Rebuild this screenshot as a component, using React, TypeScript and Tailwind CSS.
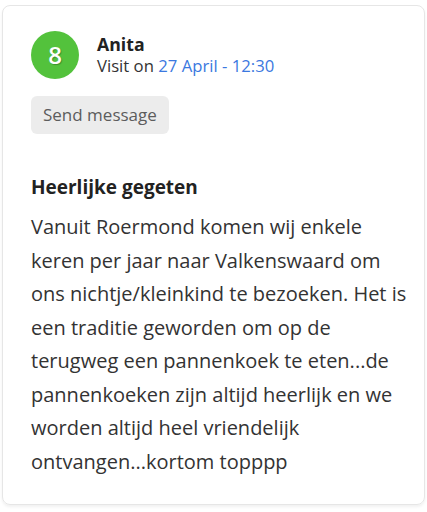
export default function App() {
  return (
    <div className="w-[427px] h-[512px] bg-white pt-[5px] pl-[2px] font-['Open_Sans',sans-serif]">
      <div className="w-[423px] h-[500px] rounded-lg border border-[#e6e6e6] shadow-[0_2px_3px_rgba(0,0,0,0.06)] px-[28px] pt-[25px]">
        <div className="flex items-center gap-[18px]">
          <div className="w-[48px] h-[48px] rounded-full bg-[#53c23c] flex items-center justify-center text-white text-[24px] font-semibold [text-shadow:1px_1px_1px_rgba(0,0,0,0.25)]">
            8
          </div>
          <div className="leading-[22px]">
            <div className="text-[17.7px] font-bold text-[#222]">Anita</div>
            <div className="text-[16.7px] text-[#333]">
              Visit on <span className="text-[#3b78e0]">27 April - 12:30</span>
            </div>
          </div>
        </div>
        <button className="mt-[17px] h-[38px] px-[12px] rounded-md bg-[#ececec] text-[#5c5c5c] text-[17px]">
          Send message
        </button>
        <h3 className="mt-[41px] text-[19px] font-bold text-[#222] leading-[24px]">Heerlijke gegeten</h3>
        <p className="mt-[11px] w-[384px] text-[20px] leading-[33.5px] text-[#333]">
          Vanuit Roermond komen wij enkele keren per jaar naar Valkenswaard om ons nichtje/kleinkind te bezoeken. Het is een traditie geworden om op de terugweg een pannenkoek te eten...de pannenkoeken zijn altijd heerlijk en we worden altijd heel vriendelijk ontvangen...kortom topppp
        </p>
      </div>
    </div>
  )
}
